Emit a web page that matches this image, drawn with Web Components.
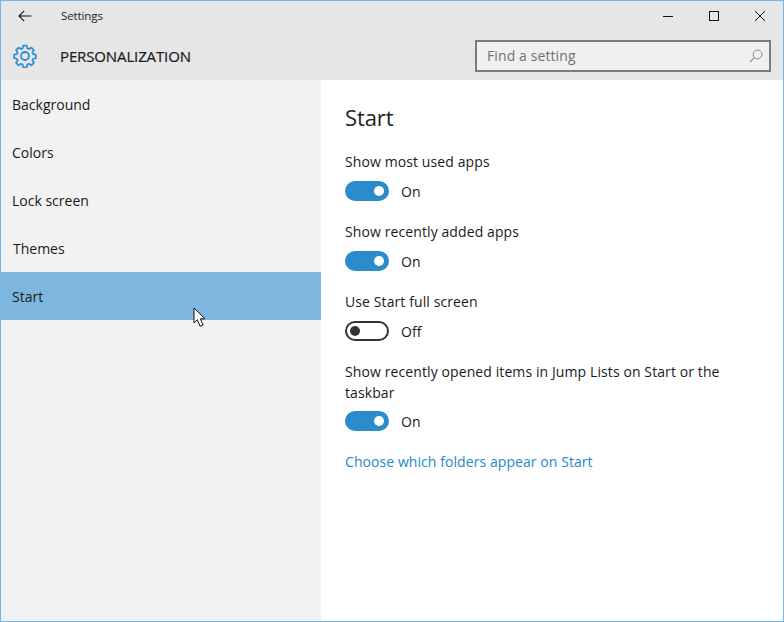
<!DOCTYPE html>
<html><head><meta charset="utf-8">
<style>
html,body{margin:0;padding:0;height:100%;overflow:hidden}
body{font-family:"Open Sans","Noto Sans",sans-serif;color:#1a1a1a}
</style></head><body>
<settings-window>
  <title-bar slot="title">Settings</title-bar>
  <page-header slot="header">PERSONALIZATION</page-header>
  <side-nav slot="nav">
    <nav-item>Background</nav-item>
    <nav-item>Colors</nav-item>
    <nav-item>Lock screen</nav-item>
    <nav-item style="--shift:1px">Themes</nav-item>
    <nav-item selected>Start
      <svg slot="over" width="14" height="21" viewBox="0 0 14 21"><path d="M1 1v15l3.4-3.2 2.6 6.4 3-1.2-2.6-6.2h4.6z" fill="#fff" stroke="#111" stroke-width="1" stroke-linejoin="round"/></svg>
    </nav-item>
  </side-nav>
  <main-pane slot="main">
    <h-title>Start</h-title>
    <toggle-row on>Show most used apps</toggle-row>
    <toggle-row on>Show recently added apps</toggle-row>
    <toggle-row>Use Start full screen</toggle-row>
    <toggle-row on style="--gap:8px">Show recently opened items in Jump Lists on Start or the taskbar</toggle-row>
    <link-text>Choose which folders appear on Start</link-text>
  </main-pane>
</settings-window>
<script>
const def=(name,html,extra={})=>{
  customElements.define(name,class extends HTMLElement{
    constructor(){super();this.attachShadow({mode:'open'}).innerHTML=html;}
    connectedCallback(){extra.connected&&extra.connected.call(this);}
  });
};
def('settings-window',`<style>
:host{display:grid;box-sizing:border-box;width:784px;height:622px;border:1px solid #6db9ec;
grid-template-columns:320px 1fr;grid-template-rows:31px 48px 1fr;background:#fff}
.t{grid-column:1/3;display:block}.h{grid-column:1/3;display:block}
</style>
<div class="t"><slot name="title"></slot></div>
<div class="h"><slot name="header"></slot></div>
<slot name="nav"></slot><slot name="main"></slot>`);
def('title-bar',`<style>
:host{display:flex;align-items:center;box-sizing:border-box;height:31px;padding-bottom:2px;background:#e6e6e6;font-size:11px;color:#222}
.back{width:48px;height:100%;display:flex;align-items:center;justify-content:center;margin-right:12px}
.title{flex:1;font-size:11.5px;letter-spacing:-.1px}
.b{width:46px;height:100%;display:flex;align-items:center;justify-content:center}
</style>
<div class="back"><svg width="14" height="12" viewBox="0 0 14 12"><path d="M13.5 6H1.2M6.2 .8 1 6l5.2 5.2" fill="none" stroke="#111" stroke-width="1.1"/></svg></div>
<div class="title"><slot></slot></div>
<div class="b"><svg width="10" height="10" viewBox="0 0 10 10"><path d="M0 5.5h10" stroke="#111" stroke-width="1"/></svg></div>
<div class="b"><svg width="10" height="10" viewBox="0 0 10 10"><rect x=".5" y=".5" width="9" height="9" fill="none" stroke="#111"/></svg></div>
<div class="b"><svg width="10" height="10" viewBox="0 0 10 10"><path d="M0 0l10 10M10 0 0 10" stroke="#111" stroke-width="1"/></svg></div>`);
def('page-header',`<style>
:host{display:flex;align-items:center;height:48px;background:#e6e6e6}
.gear{margin-left:12px;margin-right:23px;display:flex}
.name{flex:1;font-size:15px;font-weight:500;color:#1a1a1a;letter-spacing:-.13px;-webkit-text-stroke:.2px #1a1a1a}
.search{box-sizing:border-box;width:296px;height:32px;margin-right:12px;border:2px solid #7a7a7a;background:#f0f0f0;display:flex;align-items:center;justify-content:space-between;padding:0 6px 2px 10px;font-size:14px;color:#707070;letter-spacing:.1px}
.search svg{margin-top:2px}
</style>
<div class="gear"><svg width="24" height="24" viewBox="0 0 24 24"><circle cx="12" cy="12" r="4" fill="none" stroke="#2b8fd1" stroke-width="1.8"/><path d="M10 1.2h4l.6 3 1.9.8 2.6-1.7 2.8 2.8-1.7 2.6.8 1.9 3 .6v4l-3 .6-.8 1.9 1.7 2.6-2.8 2.8-2.6-1.7-1.9.8-.6 3h-4l-.6-3-1.9-.8-2.6 1.7-2.8-2.8 1.7-2.6-.8-1.9-3-.6v-4l3-.6.8-1.9-1.7-2.6 2.8-2.8 2.6 1.7 1.9-.8z" transform="translate(12 12) scale(.9) translate(-12 -12.7)" fill="none" stroke="#2b8fd1" stroke-width="1.9" stroke-linejoin="round"/></svg></div>
<div class="name"><slot></slot></div>
<div class="search"><span>Find a setting</span><svg width="14" height="14" viewBox="0 0 14 14"><circle cx="8.6" cy="5.4" r="4.4" fill="none" stroke="#8a8a8a"/><path d="M5.4 8.6.8 13.2" stroke="#8a8a8a" stroke-width="1.1"/></svg></div>`);
def('side-nav',`<style>:host{display:flex;flex-direction:column;background:#f2f2f2}</style><slot></slot>`);
def('nav-item',`<style>
:host{display:flex;align-items:center;position:relative;height:48px;box-sizing:border-box;padding-left:calc(11px + var(--shift,0px));font-size:14px;color:#1a1a1a;letter-spacing:0}
:host([selected]){background:#7db7dd}
::slotted(svg){position:absolute;left:192px;top:35px;z-index:2}
</style><slot></slot><slot name="over"></slot>`);
def('main-pane',`<style>:host{display:flex;flex-direction:column;padding:0 24px;background:#fff;min-width:0}</style><slot></slot>`);
def('h-title',`<style>:host{display:block;font-size:22px;line-height:28px;margin-top:23px;margin-bottom:20px;color:#222;letter-spacing:-.1px}</style><slot></slot>`);
def('toggle-row',`<style>
:host{display:block;margin-bottom:20px;font-size:14px;color:#1a1a1a;letter-spacing:.1px}
.label{line-height:21px;max-width:400px;margin-bottom:var(--gap,9px)}
.row{display:flex;align-items:center;height:20px;gap:12px}
.sw{box-sizing:border-box;width:44px;height:20px;border-radius:10px;border:2px solid #333;background:transparent;display:flex;align-items:center;padding:0 3px}
.k{width:10px;height:10px;border-radius:50%;background:#333}
:host([on]) .sw{background:#2b8ccc;border-color:#2b8ccc;justify-content:flex-end}
:host([on]) .k{background:#fff}
</style>
<div class="label"><slot></slot></div>
<div class="row"><div class="sw"><div class="k"></div></div><span id="s"></span></div>`,{connected(){this.shadowRoot.getElementById('s').textContent=this.hasAttribute('on')?'On':'Off';}});
def('link-text',`<style>:host{display:block;font-size:14px;line-height:21px;color:#1e88c9;letter-spacing:.07px;margin-top:0}</style><slot></slot>`);
</script>
</body></html>
